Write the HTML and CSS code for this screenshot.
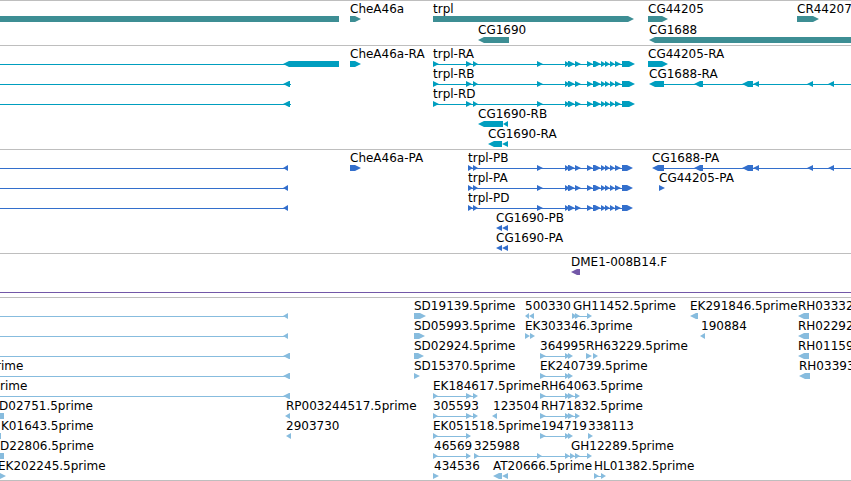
FILE: index.html
```html
<!DOCTYPE html>
<html lang="en">
<head>
<meta charset="utf-8">
<title>Genome browser</title>
<link rel="stylesheet" href="styles.css">
</head>
<body>
<main class="browser" id="browser"></main>
<script src="tracks.js"></script>
</body>
</html>
```
FILE: styles.css
```css
* {
  box-sizing: border-box;
}

body {
  margin: 0;
  background: #fff;
  color: #000;
  font-family: "DejaVu Sans", sans-serif;
  font-size: 12px;
  line-height: 16px;
}

.browser {
  overflow: hidden;
  border-top: 1px solid #bebebe;
}

.track {
  padding-bottom: 3px;
  border-bottom: 1px solid #bebebe;
}

.track.genes {
  color: #3d8e94;
  padding-bottom: 2px;
}

.track.transcripts {
  color: #009ebf;
}

.track.proteins {
  color: #336fcc;
}

.track.clones {
  color: #7358a8;
}

.track.ests {
  color: #87bcde;
  padding-bottom: 2px;
}

.row {
  position: relative;
  height: 20px;
}

.genes .row {
  height: 21px;
}

.glyphs {
  position: absolute;
  top: 0;
  left: 0;
  width: 100%;
  height: 22px;
  fill: currentColor;
}

.label {
  position: absolute;
  top: 0;
  color: #000;
  white-space: nowrap;
}
```
FILE: tracks.js
```js
// A row holds labels [x, text], intron lines [from, to], and exons
// [from, to] that point right or left. END lies past any window edge.
const END = 6000;

const tail = [[537, 543], [565, 570], [568, 575], [575, 581], [587, 593], [593, 601],
  [601, 606], [605, 610], [610, 615], [615, 621]];
const trplR = [[433, 439], [466, 472], [473, 478], ...tail, [622, 635]];
const trplP = [[468, 473], [473, 478], ...tail, [622, 633]];
const cg1688 = [[694, 703], [742, 753], [753, 759], [807, 813], [828, 834]];
const rh = [[540, 546], [565, 570], [568, 574], [575, 580]];
const ek = [[540, 546], [565, 570], [568, 573]];
const start = [[433, 438], [466, 472], [473, 478]];

const tracks = [
  { name: "genes", rows: [
    { labels: [[350, "CheA46a"], [433, "trpl"], [648, "CG44205"], [797, "CR44207"]],
      right: [[350, 361], [433, 634], [648, 668], [797, 819]], left: [[-20, 339]] },
    { labels: [[478, "CG1690"], [649, "CG1688"]], left: [[478, 509], [649, END]] },
  ] },
  { name: "transcripts", rows: [
    { labels: [[350, "CheA46a-RA"], [433, "trpl-RA"], [648, "CG44205-RA"]],
      lines: [[0, 285], [433, 630]], left: [[283, 339]], right: [[350, 361], ...trplR, [648, 668]] },
    { labels: [[433, "trpl-RB"], [649, "CG1688-RA"]],
      lines: [[0, 291], [433, 630], [655, END]], left: [[283, 290], [649, 664], ...cg1688], right: trplR },
    { labels: [[433, "trpl-RD"]], lines: [[0, 291], [433, 630]], left: [[283, 290]], right: trplR },
    { labels: [[478, "CG1690-RB"]], left: [[478, 503], [503, 508]] },
    { labels: [[488, "CG1690-RA"]], left: [[488, 502], [502, 508]] },
  ] },
  { name: "proteins", rows: [
    { labels: [[350, "CheA46a-PA"], [468, "trpl-PB"], [652, "CG1688-PA"]],
      lines: [[0, 285], [468, 630], [655, END]], left: [[283, 288], [652, 664], ...cg1688],
      right: [[350, 361], ...trplP] },
    { labels: [[468, "trpl-PA"], [659, "CG44205-PA"]],
      lines: [[0, 285], [468, 630]], left: [[283, 288]], right: [...trplP, [659, 665]] },
    { labels: [[468, "trpl-PD"]], lines: [[0, 285], [468, 630]], left: [[283, 288]], right: trplP },
    { labels: [[496, "CG1690-PB"]], left: [[496, 502], [502, 508]] },
    { labels: [[496, "CG1690-PA"]], left: [[496, 502], [502, 508]] },
  ] },
  { name: "clones", rows: [
    { labels: [[571, "DME1-008B14.F"]], left: [[571, 580]] },
    { lines: [[0, END]] },
  ] },
  { name: "ests", rows: [
    { labels: [[414, "SD19139.5prime"], [525, "500330"], [573, "GH11452.5prime"], [690, "EK291846.5prime"], [798, "RH03332"]],
      lines: [[0, 285], [572, 590]], left: [[283, 288], [525, 529], [529, 534], [690, 698], [798, 809]],
      right: [[414, 426], [572, 577], [575, 580], [587, 592]] },
    { labels: [[414, "SD05993.5prime"], [525, "EK303346.3prime"], [701, "190884"], [798, "RH02292"]],
      lines: [[0, 285]], left: [[283, 288], [700, 705], [798, 809]], right: [[414, 425], [525, 530], [530, 535]] },
    { labels: [[414, "SD02924.5prime"], [540, "364995"], [586, "RH63229.5prime"], [798, "RH01159"]],
      lines: [[0, 285], [540, 570]], left: [[283, 290], [798, 809]],
      right: [[414, 424], ...ek, [586, 592], [593, 598]] },
    { labels: [[-4, "rime"], [414, "SD15370.5prime"], [540, "EK240739.5prime"], [799, "RH03393"]],
      lines: [[0, 285], [540, 570]], left: [[283, 290], [799, 810]], right: [[414, 420], ...ek] },
    { labels: [[0, "rime"], [433, "EK184617.5prime"], [541, "RH64063.5prime"]],
      lines: [[0, 285], [433, 475], [540, 578]], left: [[283, 290]], right: [...start, ...rh] },
    { labels: [[-1, "D02751.5prime"], [286, "RP003244517.5prime"], [433, "305593"], [493, "123504"], [541, "RH71832.5prime"]],
      lines: [[433, 475], [540, 578]], left: [[-20, 4], [285, 290], [492, 497]], right: [...start, ...rh] },
    { labels: [[1, "K01643.5prime"], [286, "2903730"], [433, "EK051518.5prime"], [541, "194719"], [588, "338113"]],
      lines: [[433, 470], [540, 570]], left: [[-20, 1], [286, 291]], right: [[433, 438], [466, 471], ...ek, [588, 593]] },
    { labels: [[0, "D22806.5prime"], [434, "46569"], [474, "325988"], [571, "GH12289.5prime"]],
      lines: [[433, 470], [474, 590]], left: [[-20, 4]],
      right: [[433, 438], [466, 471], [474, 479], [537, 542], [565, 570], [570, 575], [575, 580], [587, 592]] },
    { labels: [[-2, "EK202245.5prime"], [434, "434536"], [493, "AT20666.5prime"], [594, "HL01382.5prime"]],
      lines: [[594, 604]], left: [[493, 502], [502, 508]], right: [[-20, 6], [433, 439], [594, 599], [601, 606]] },
  ] },
];

// Exon outline: a 6px block whose last 6px narrow to a point.
function exon(base, tip) {
  const head = Math.min(6, Math.abs(tip - base));
  const neck = tip > base ? tip - head : tip + head;
  return `M${base} 15H${neck}L${tip} 18L${neck} 21H${base}Z`;
}

function rowMarkup({ labels = [], lines = [], left = [], right = [] }) {
  const path = [
    ...lines.map(([a, b]) => `M${a} 18H${b}V19H${a}Z`),
    ...right.map(([a, b]) => exon(a, b)),
    ...left.map(([a, b]) => exon(b, a)),
  ].map((d) => `<path d="${d}"/>`).join("");
  const text = labels.map(([x, t]) => `<span class="label" style="left:${x}px">${t}</span>`).join("");
  return `<div class="row"><svg class="glyphs" aria-hidden="true">${path}</svg>${text}</div>`;
}

document.getElementById("browser").innerHTML = tracks
  .map((t) => `<section class="track ${t.name}" aria-label="${t.name}">${t.rows.map(rowMarkup).join("")}</section>`)
  .join("");
```
